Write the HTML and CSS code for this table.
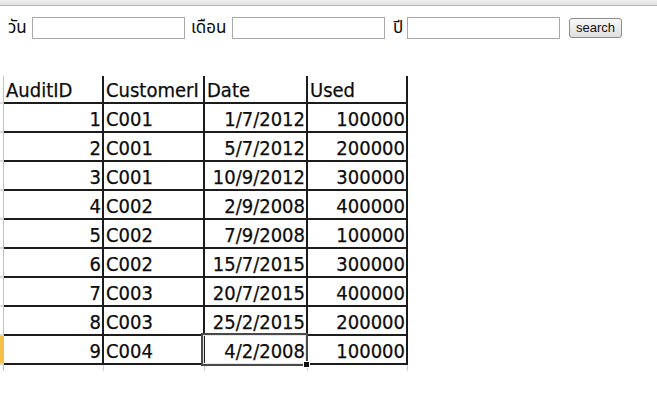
FILE: index.html
```html
<!DOCTYPE html>
<html lang="th">
<head>
<meta charset="utf-8">
<title>Search</title>
<link rel="stylesheet" href="styles.css">
</head>
<body>
<div class="topstrip"></div>
<form class="searchbar">
  <label class="lbl lbl-day">วัน</label>
  <input class="field" type="text">
  <label class="lbl lbl-month">เดือน</label>
  <input class="field" type="text">
  <label class="lbl lbl-year">ปี</label>
  <input class="field" type="text">
  <button class="btn" type="button">search</button>
</form>
<div class="sheet">
  <div class="rh"></div><div class="c hd">AuditID</div><div class="c hd">CustomerI</div><div class="c hd">Date</div><div class="c hd">Used</div>
  <div class="rh"></div><div class="c num">1</div><div class="c">C001</div><div class="c num">1/7/2012</div><div class="c num">100000</div>
  <div class="rh"></div><div class="c num">2</div><div class="c">C001</div><div class="c num">5/7/2012</div><div class="c num">200000</div>
  <div class="rh"></div><div class="c num">3</div><div class="c">C001</div><div class="c num">10/9/2012</div><div class="c num">300000</div>
  <div class="rh"></div><div class="c num">4</div><div class="c">C002</div><div class="c num">2/9/2008</div><div class="c num">400000</div>
  <div class="rh"></div><div class="c num">5</div><div class="c">C002</div><div class="c num">7/9/2008</div><div class="c num">100000</div>
  <div class="rh"></div><div class="c num">6</div><div class="c">C002</div><div class="c num">15/7/2015</div><div class="c num">300000</div>
  <div class="rh"></div><div class="c num">7</div><div class="c">C003</div><div class="c num">20/7/2015</div><div class="c num">400000</div>
  <div class="rh"></div><div class="c num">8</div><div class="c">C003</div><div class="c num">25/2/2015</div><div class="c num">200000</div>
  <div class="rh rh-sel"></div><div class="c num">9</div><div class="c">C004</div><div class="c num sel">4/2/2008</div><div class="c num">100000</div>
  <div class="rh tail"></div><div class="t"></div><div class="t"></div><div class="t"></div><div class="t"></div>
</div>
</body>
</html>
```

FILE: styles.css
```css
html, body {
  margin: 0;
  padding: 0;
  background: #ffffff;
}

.topstrip {
  height: 5px;
  background: linear-gradient(#eeeeee, #e2e2e2);
  border-bottom: 1px solid #b2b2b2;
}

.searchbar {
  display: flex;
  align-items: center;
  height: 22px;
  margin: 11px 0 0 0;
  padding-left: 8px;
}

.lbl {
  font-family: Tahoma, "Noto Sans Thai", "Loma", "Garuda", "Norasi", "DejaVu Sans", sans-serif;
  font-size: 17px;
  color: #0a0a0a;
  line-height: 22px;
}

.lbl-day { width: 24px; }
.lbl-month { width: 41px; margin-left: 6px; }
.lbl-year { width: 14px; margin-left: 8px; }

.field {
  box-sizing: border-box;
  width: 153px;
  height: 22px;
  margin: 0;
  padding: 1px 2px;
  border: 1px solid #a9a9a9;
  background: #ffffff;
  font-family: "Liberation Sans", Arial, sans-serif;
  font-size: 13px;
}

.btn {
  box-sizing: border-box;
  width: 53px;
  height: 20px;
  margin: 0 0 0 9px;
  padding: 0;
  border: 1px solid #8c8c8c;
  border-radius: 3px;
  background: linear-gradient(#f8f8f8, #dedede);
  font-family: "Liberation Sans", Arial, sans-serif;
  font-size: 13px;
  color: #111111;
  line-height: 18px;
}

.sheet {
  display: grid;
  grid-template-columns: 4px 100px 101px 103px 100px;
  grid-template-rows: 28px repeat(9, 29px) 6px;
  margin-top: 37px;
  width: 408px;
  font-family: "DejaVu Sans Condensed", "DejaVu Sans", sans-serif;
  font-size: 20px;
  color: #0c0c0c;
  -webkit-text-stroke: 0.25px #0c0c0c;
}

.rh {
  box-sizing: border-box;
  border-right: 1px solid #bcc0c8;
  border-bottom: 2px solid #dadada;
  background: #ffffff;
}

.rh-sel {
  background: #f4c148;
}

.rh.tail {
  border-bottom: none;
}

.c {
  box-sizing: border-box;
  display: flex;
  align-items: flex-end;
  border-right: 2px solid #1c1c1c;
  border-bottom: 2px solid #1c1c1c;
  padding: 0 1px 0 2px;
  line-height: 23px;
  white-space: nowrap;
}

.num {
  justify-content: flex-end;
}

.sel {
  position: relative;
}

.sel::before {
  content: "";
  position: absolute;
  left: -4px;
  top: -3px;
  right: -2px;
  bottom: -3px;
  border: 2px solid #4a4a4a;
  box-shadow: inset 0 0 0 1px #e6e6e6;
}

.sel::after {
  content: "";
  position: absolute;
  right: -4px;
  bottom: -5px;
  width: 5px;
  height: 5px;
  background: #111111;
  border: 1px solid #ffffff;
}

.t {
  box-sizing: border-box;
  border-right: 1px solid #d0d0d0;
}
```
